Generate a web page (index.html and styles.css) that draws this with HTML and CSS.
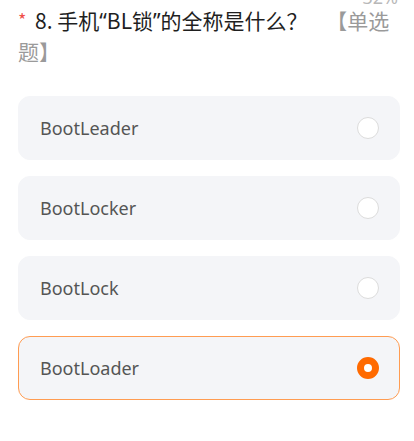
FILE: index.html
```html
<!DOCTYPE html>
<html lang="zh">
<head>
<meta charset="utf-8">
<link rel="stylesheet" href="styles.css">
</head>
<body>
<div class="page">
  <div class="progress">32%</div>
  <div class="title"><span class="req">*</span> 8. 手机<span class="q">“</span>BL锁<span class="q">”</span>的全称是什么？ <span class="type">【单选题】</span></div>
  <div class="options">
    <div class="option"><span class="label">BootLeader</span><span class="radio"></span></div>
    <div class="option"><span class="label">BootLocker</span><span class="radio"></span></div>
    <div class="option"><span class="label">BootLock</span><span class="radio"></span></div>
    <div class="option selected"><span class="label">BootLoader</span><span class="radio"></span></div>
  </div>
</div>
</body>
</html>
```
FILE: styles.css
```css
html, body {
  margin: 0;
  padding: 0;
  background: #ffffff;
}
.page {
  padding: 0 14px 0 18px;
  font-family: "Noto Sans CJK SC", "Noto Sans", sans-serif;
  overflow: hidden;
  height: 441px;
  box-sizing: border-box;
}
.progress {
  text-align: right;
  color: #b8b8b8;
  font-family: "Noto Sans", sans-serif;
  font-size: 18px;
  line-height: 18px;
  height: 8px;
  margin-top: -12px;
  padding-right: 2px;
}
.title {
  font-size: 21px;
  line-height: 30px;
  color: #1f1f1f;
  margin-top: 8px;
}
.q {
  font-family: "Noto Sans", sans-serif;
}
.req {
  color: #f0504a;
  font-size: 18px;
  vertical-align: 2px;
  margin-right: 4px;
}
.type {
  color: #9a9a9a;
  margin-left: 14px;
}
.options {
  display: flex;
  flex-direction: column;
  gap: 16px;
  margin-top: 30px;
}
.option {
  height: 64px;
  box-sizing: border-box;
  border-radius: 12px;
  background: #f4f5f8;
  border: 1px solid #f4f5f8;
  display: flex;
  align-items: center;
  justify-content: space-between;
  padding: 0 20px 0 21px;
}
.option.selected {
  border-color: #ff9c52;
}
.label {
  font-family: "Noto Sans", "Noto Sans CJK SC", sans-serif;
  font-size: 18px;
  color: #555555;
}
.radio {
  width: 22px;
  height: 22px;
  box-sizing: border-box;
  border-radius: 50%;
  background: #ffffff;
  border: 1px solid #dcdcdc;
}
.option.selected .radio {
  border: 7px solid #ff6a00;
}
```
